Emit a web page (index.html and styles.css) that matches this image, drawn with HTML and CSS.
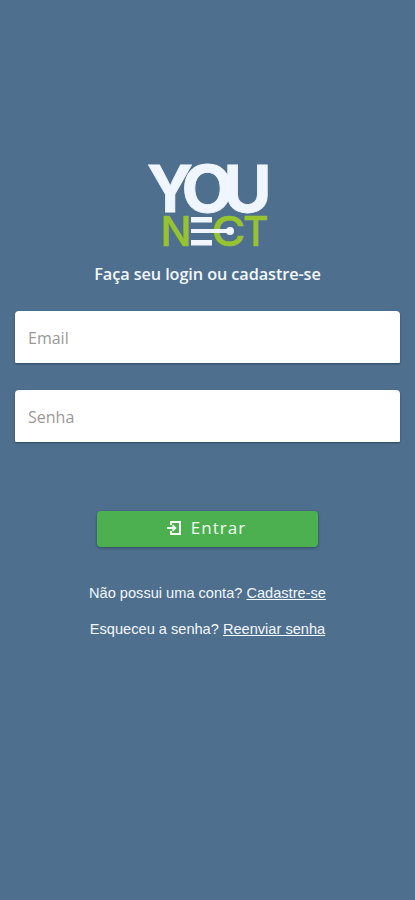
FILE: index.html
```html
<!DOCTYPE html>
<html lang="pt-BR">
<head>
<meta charset="utf-8">
<meta name="viewport" content="width=device-width, initial-scale=1">
<title>Younect</title>
<link rel="stylesheet" href="styles.css">
</head>
<body>
<main class="login">
  <svg class="logo" viewBox="0 0 121 85" role="img" aria-label="Younect">
    <g class="logo-you">
      <text x="0" y="48.500" textLength="46" lengthAdjust="spacingAndGlyphs">Y</text>
      <text x="34.500" y="48.500" textLength="52" lengthAdjust="spacingAndGlyphs">O</text>
      <text x="76.500" y="48.500" textLength="48" lengthAdjust="spacingAndGlyphs">U</text>
    </g>
    <g class="logo-nect">
      <text x="13.500" y="83" textLength="31" lengthAdjust="spacingAndGlyphs">N</text>
      <text x="64.500" y="83" textLength="34" lengthAdjust="spacingAndGlyphs">C</text>
      <text x="96" y="83" textLength="25.500" lengthAdjust="spacingAndGlyphs">T</text>
    </g>
    <path class="logo-bars" d="M44 54h21v5.500H44zM44 66h37v4H44zM44 77h21v5.500H44z"/>
    <circle class="logo-bars" cx="83" cy="68" r="4"/>
  </svg>
  <h1 class="title">Faça seu login ou cadastre-se</h1>
  <form class="form">
    <input class="field" type="email" placeholder="Email" aria-label="Email">
    <input class="field" type="password" placeholder="Senha" aria-label="Senha">
    <button class="submit" type="button">
      <svg class="enter" viewBox="0 0 14 14" aria-hidden="true">
        <path d="M4 4V1h9v12H4v-3M0 7h8M5.500 4.200 8.300 7 5.500 9.800"/>
      </svg>
      <span>Entrar</span>
    </button>
  </form>
  <p class="link-row">Não possui uma conta? <a href="#">Cadastre-se</a></p>
  <p class="link-row">Esqueceu a senha? <a href="#">Reenviar senha</a></p>
</main>
</body>
</html>
```
FILE: styles.css
```css
* { box-sizing: border-box; }
body { margin: 0; background: #4f6f8f; color: #f2f7fc; }
.login {
  min-height: 900px;
  padding: 163px 15px 0;
  display: flex;
  flex-direction: column;
  align-items: center;
}
.logo { width: 121px; height: 85px; display: block; overflow: visible; }
.logo-you { font: 700 64px Inter, sans-serif; fill: #f0f6ff; stroke: #f0f6ff; stroke-width: .8; }
.logo-nect { font: 500 41px Inter, sans-serif; fill: #96c32f; stroke: #96c32f; stroke-width: .5; }
.logo-bars { fill: #f0f6ff; }
.title {
  margin: 14px 0 0;
  font: 600 16.300px/24px "Open Sans", sans-serif;
  letter-spacing: -.1px;
  white-space: nowrap;
}
.form { width: 100%; margin-top: 25px; display: flex; flex-direction: column; align-items: center; }
.field {
  width: 100%;
  height: 52px;
  margin-bottom: 27px;
  padding: 2px 13px 0;
  border: 0;
  border-radius: 4px 4px 1px 1px;
  background: #fff;
  box-shadow: 0 1px 2px #2d485f;
  font: 400 16px "Open Sans", sans-serif;
}
.field::placeholder { color: #999; opacity: 1; }
.submit {
  width: 221px;
  height: 36px;
  margin-top: 42px;
  padding: 0 2px 3px 0;
  display: flex;
  align-items: center;
  justify-content: center;
  gap: 10px;
  border: 0;
  border-radius: 4px;
  background: #4caf50;
  color: #f3fff0;
  box-shadow: 0 1px 3px #304b62;
  font: 500 17px "Open Sans", sans-serif;
  letter-spacing: 1px;
}
.enter { width: 14px; height: 14px; fill: none; stroke: currentColor; stroke-width: 2; }
.link-row { margin: 18px 0 0; font: 14.600px/18px "Liberation Sans", sans-serif; white-space: nowrap; }
.form + .link-row { margin-top: 37px; }
.link-row a { color: inherit; }
```
